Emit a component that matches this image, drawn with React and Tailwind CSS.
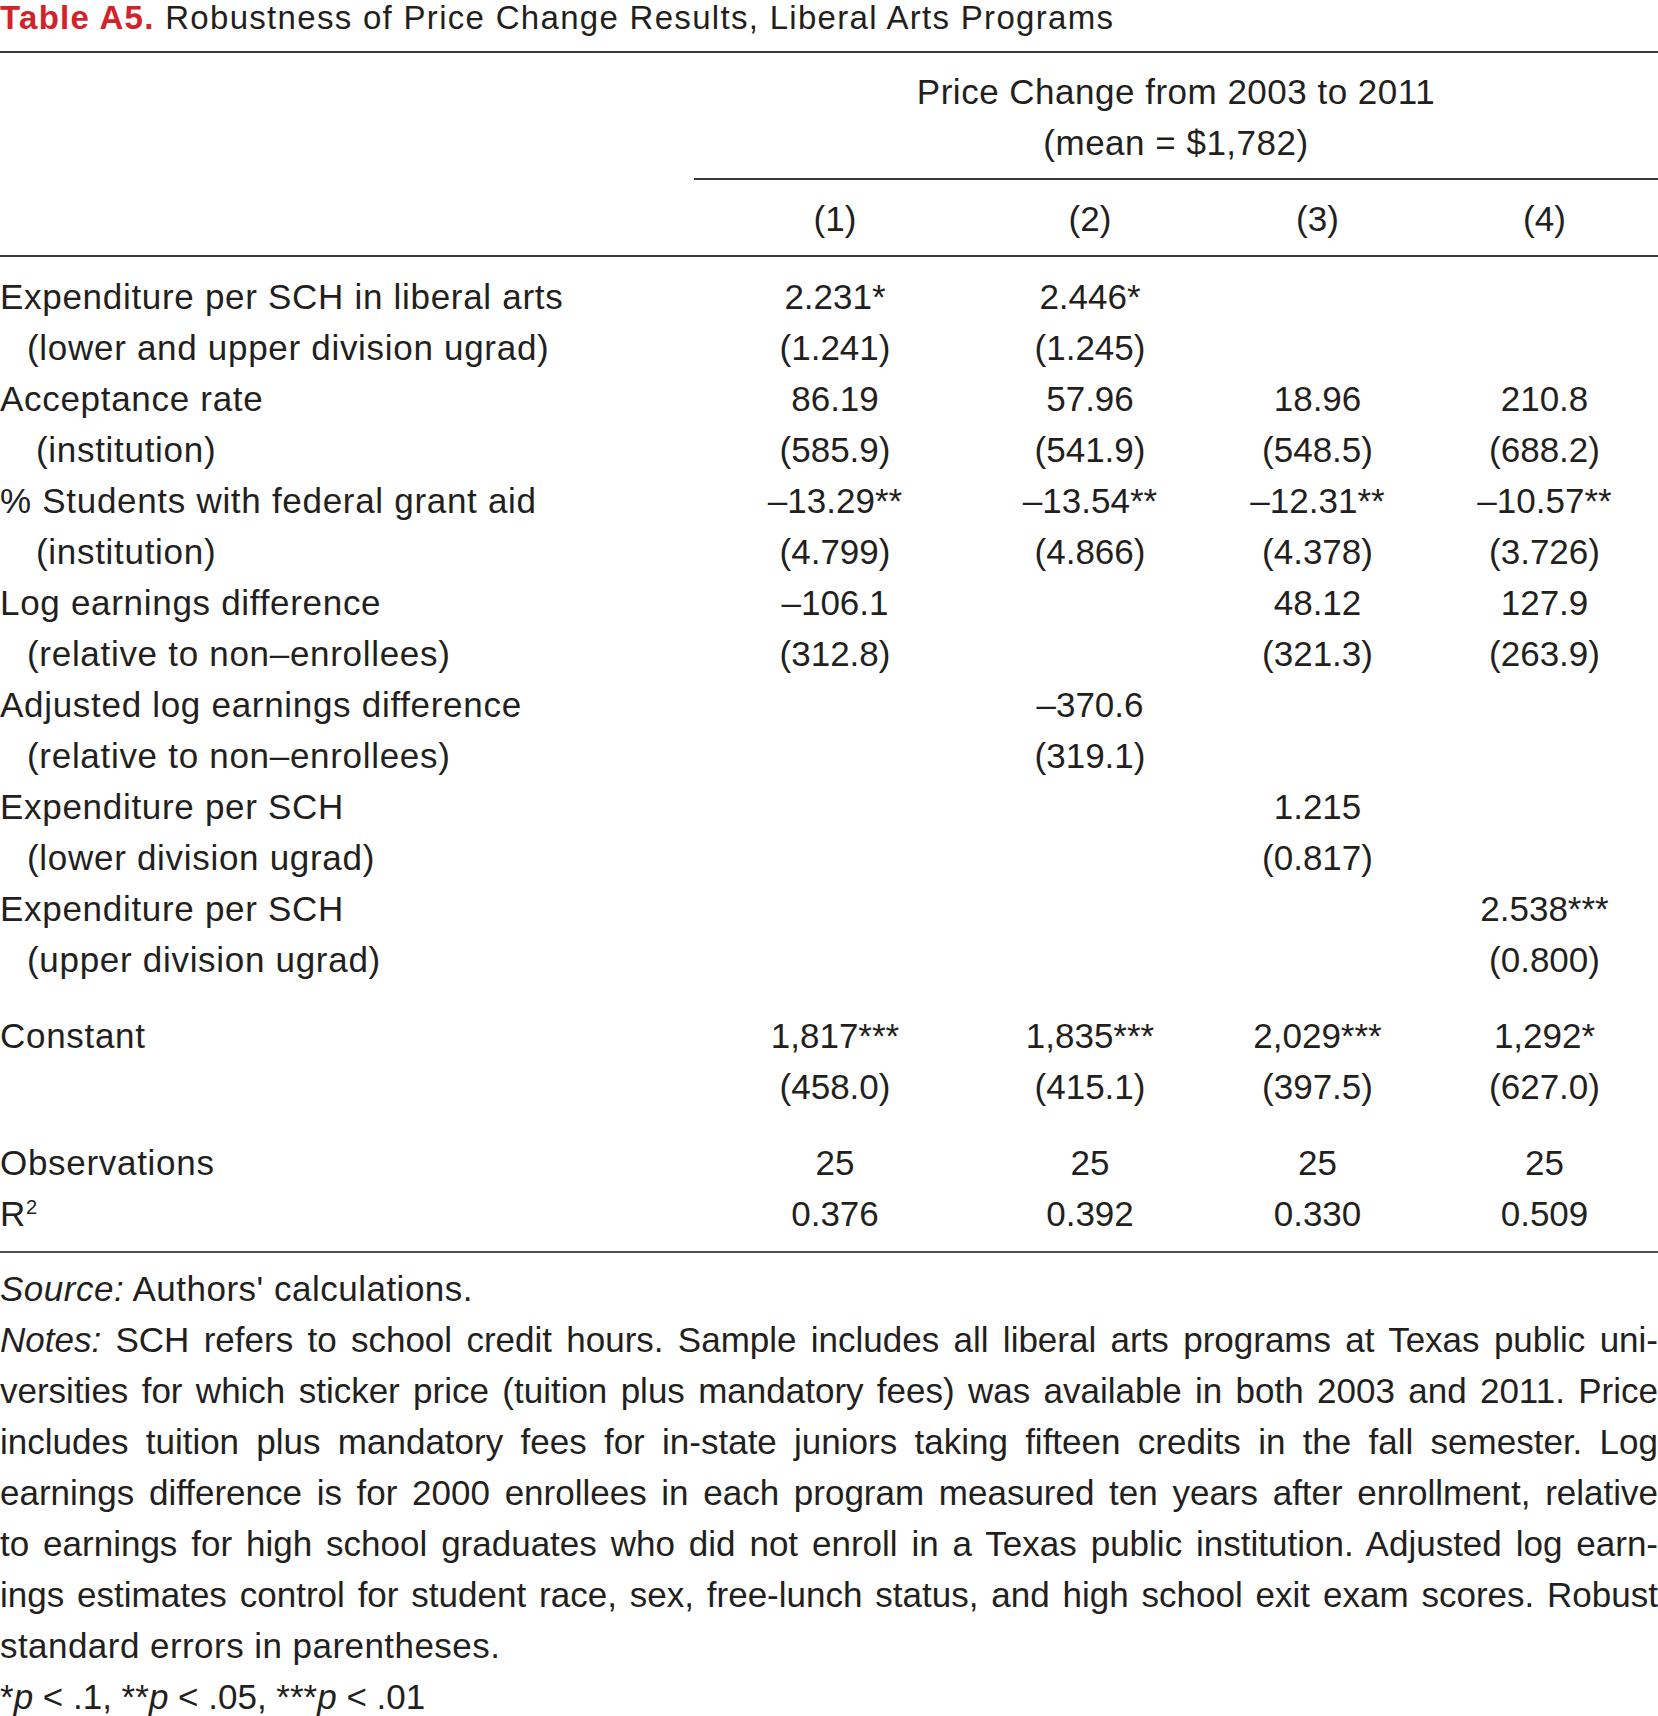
const rows = [
  { label: 'Expenditure per SCH in liberal arts', vals: ['2.231*', '2.446*', '', ''] },
  { label: '(lower and upper division ugrad)', sub: 'pl-[27px]', vals: ['(1.241)', '(1.245)', '', ''] },
  { label: 'Acceptance rate', vals: ['86.19', '57.96', '18.96', '210.8'] },
  { label: '(institution)', sub: 'pl-[36px]', vals: ['(585.9)', '(541.9)', '(548.5)', '(688.2)'] },
  { label: '% Students with federal grant aid', vals: ['–13.29**', '–13.54**', '–12.31**', '–10.57**'] },
  { label: '(institution)', sub: 'pl-[36px]', vals: ['(4.799)', '(4.866)', '(4.378)', '(3.726)'] },
  { label: 'Log earnings difference', vals: ['–106.1', '', '48.12', '127.9'] },
  { label: '(relative to non–enrollees)', sub: 'pl-[27px]', vals: ['(312.8)', '', '(321.3)', '(263.9)'] },
  { label: 'Adjusted log earnings difference', vals: ['', '–370.6', '', ''] },
  { label: '(relative to non–enrollees)', sub: 'pl-[27px]', vals: ['', '(319.1)', '', ''] },
  { label: 'Expenditure per SCH', vals: ['', '', '1.215', ''] },
  { label: '(lower division ugrad)', sub: 'pl-[27px]', vals: ['', '', '(0.817)', ''] },
  { label: 'Expenditure per SCH', vals: ['', '', '', '2.538***'] },
  { label: '(upper division ugrad)', sub: 'pl-[27px]', vals: ['', '', '', '(0.800)'] },
];

const notes = [
  'SCH refers to school credit hours. Sample includes all liberal arts programs at Texas public uni-',
  'versities for which sticker price (tuition plus mandatory fees) was available in both 2003 and 2011. Price',
  'includes tuition plus mandatory fees for in-state juniors taking fifteen credits in the fall semester. Log',
  'earnings difference is for 2000 enrollees in each program measured ten years after enrollment, relative',
  'to earnings for high school graduates who did not enroll in a Texas public institution. Adjusted log earn-',
  'ings estimates control for student race, sex, free-lunch status, and high school exit exam scores. Robust',
];

function Row({ label, sub, vals }) {
  return (
    <div className="grid grid-cols-[694px_282px_228px_227px_227px] h-[51px] items-center">
      <div className={`tracking-[0.7px] ${sub || ''}`}>{label}</div>
      {vals.map((v, i) => (
        <div key={i} className="text-center">{v}</div>
      ))}
    </div>
  );
}

export default function App() {
  return (
    <div className="w-[1658px] h-[1716px] bg-white text-[#231f20] font-['Liberation_Sans',Arial,sans-serif] text-[35px] leading-[51px] overflow-hidden">
      {/* title */}
      <div className="pt-[2px] text-[33px] leading-[32px] tracking-[1.3px] whitespace-nowrap">
        <span className="font-bold text-[#d2232a]">Table A5.</span> Robustness of Price Change Results, Liberal Arts Programs
      </div>
      <div className="mt-[17px] h-[2px] bg-[#3a3a3a]" />

      {/* header */}
      <div className="grid grid-cols-[694px_964px]">
        <div />
        <div className="text-center pt-[13px] tracking-[0.5px]">
          <div>Price Change from 2003 to 2011</div>
          <div>(mean = $1,782)</div>
          <div className="mt-[10px] h-[2px] bg-[#3a3a3a]" />
        </div>
      </div>
      <div className="pt-[13px] grid grid-cols-[694px_282px_228px_227px_227px] h-[64px]">
        <div />
        <div className="text-center">(1)</div>
        <div className="text-center">(2)</div>
        <div className="text-center">(3)</div>
        <div className="text-center">(4)</div>
      </div>
      <div className="mt-[11px] h-[2px] bg-[#3a3a3a]" />

      {/* body */}
      <div className="pt-[14px]">
        {rows.map((r, i) => (
          <Row key={i} {...r} />
        ))}
      </div>
      <div className="pt-[25px]">
        <Row label="Constant" vals={['1,817***', '1,835***', '2,029***', '1,292*']} />
        <Row label="" vals={['(458.0)', '(415.1)', '(397.5)', '(627.0)']} />
      </div>
      <div className="pt-[25px]">
        <Row label="Observations" vals={['25', '25', '25', '25']} />
        <Row
          label={
            <span>
              R<sup className="text-[20px] relative -top-[12px]">2</sup>
            </span>
          }
          vals={['0.376', '0.392', '0.330', '0.509']}
        />
      </div>
      <div className="mt-[12px] h-[2px] bg-[#4f4f4f]" />

      {/* notes */}
      <div className="pt-[10px]">
        <div className="tracking-[0.5px]">
          <em>Source:</em> Authors' calculations.
        </div>
        {notes.map((line, i) => (
          <div key={i} className="text-justify [text-align-last:justify]">
            {i === 0 && <em>Notes: </em>}
            {line}
          </div>
        ))}
        <div className="tracking-[0.45px]">standard errors in parentheses.</div>
        <div>
          *<em>p</em> &lt; .1, **<em>p</em> &lt; .05, ***<em>p</em> &lt; .01
        </div>
      </div>
    </div>
  );
}
